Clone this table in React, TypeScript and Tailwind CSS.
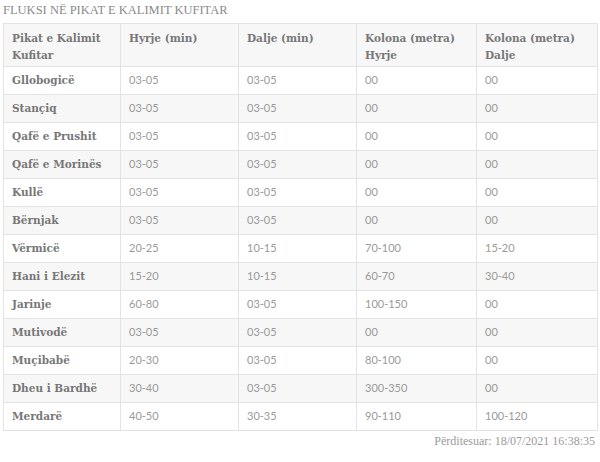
const rows: string[][] = [
  ["Gllobogicë", "03-05", "03-05", "00", "00"],
  ["Stançiq", "03-05", "03-05", "00", "00"],
  ["Qafë e Prushit", "03-05", "03-05", "00", "00"],
  ["Qafë e Morinës", "03-05", "03-05", "00", "00"],
  ["Kullë", "03-05", "03-05", "00", "00"],
  ["Bërnjak", "03-05", "03-05", "00", "00"],
  ["Vërmicë", "20-25", "10-15", "70-100", "15-20"],
  ["Hani i Elezit", "15-20", "10-15", "60-70", "30-40"],
  ["Jarinje", "60-80", "03-05", "100-150", "00"],
  ["Mutivodë", "03-05", "03-05", "00", "00"],
  ["Muçibabë", "20-30", "03-05", "80-100", "00"],
  ["Dheu i Bardhë", "30-40", "03-05", "300-350", "00"],
  ["Merdarë", "40-50", "30-35", "90-110", "100-120"],
];

// header cells, split where the reference wraps
const headers: string[][] = [
  ["Pikat e Kalimit", "Kufitar"],
  ["Hyrje (min)"],
  ["Dalje (min)"],
  ["Kolona (metra)", "Hyrje"],
  ["Kolona (metra)", "Dalje"],
];

export default function App() {
  return (
    <div className="w-[600px] h-[462px] bg-white px-[3px] pt-[1px] font-['Liberation_Serif',serif]">
      <h2 className="text-[12.5px] leading-[18px] text-[#8a8a8a]">FLUKSI NË PIKAT E KALIMIT KUFITAR</h2>
      <table className="mt-[4px] w-[594px] table-fixed border-collapse border border-[#e3e3e3] text-[11px]">
        <colgroup>
          <col className="w-[117px]" />
          <col className="w-[118px]" />
          <col className="w-[118px]" />
          <col className="w-[120px]" />
          <col className="w-[121px]" />
        </colgroup>
        <thead>
          <tr className="bg-[#f7f7f7] h-[43px]">
            {headers.map((h, k) => (
              <th key={k} className="border border-[#e3e3e3] px-[8px] align-top pt-[6px] text-left font-['DejaVu_Serif',serif] text-[10.5px] font-bold text-[#777] leading-[17px] whitespace-nowrap">
                {h.map((line, n) => (
                  <div key={n}>{line}</div>
                ))}
              </th>
            ))}
          </tr>
        </thead>
        <tbody>
          {rows.map((r, i) => (
            <tr key={r[0]} className={i % 2 === 1 ? "bg-[#f7f7f7] h-[28px]" : "bg-white h-[28px]"}>
              {r.map((c, j) => (
                <td
                  key={j}
                  className={
                    j === 0
                      ? "border border-[#e3e3e3] px-[8px] font-['DejaVu_Serif',serif] text-[10.5px] font-bold text-[#777]"
                      : "border border-[#e3e3e3] px-[8px] font-['Lato',sans-serif] text-[#9a9a9a]"
                  }
                >
                  {c}
                </td>
              ))}
            </tr>
          ))}
        </tbody>
      </table>
      <p className="mt-[1px] text-right pr-[2px] text-[12px] text-[#9a9a9a]">Përditesuar: 18/07/2021 16:38:35</p>
    </div>
  );
}
